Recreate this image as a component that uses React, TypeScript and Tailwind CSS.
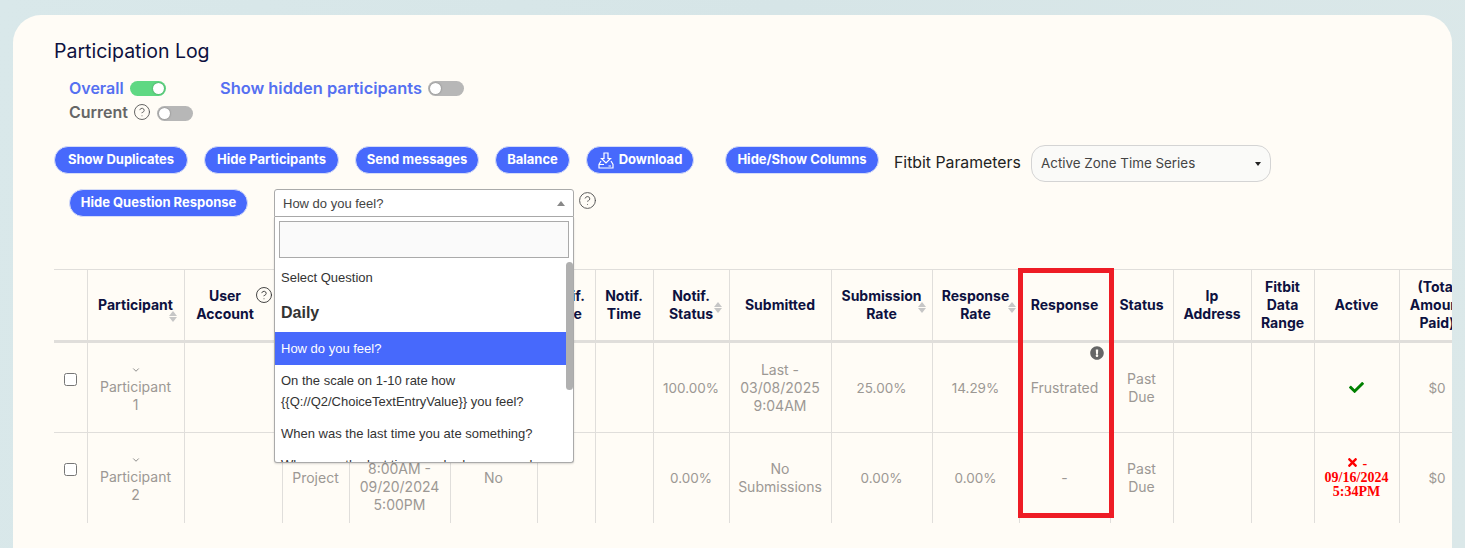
import { CircleHelp, ChevronDown } from "lucide-react";
import { FaCheck, FaTimes, FaExclamationCircle } from "react-icons/fa";

const dm = "font-['Inter','Noto_Sans',sans-serif]";

function Toggle({ on, className = "" }: { on?: boolean; className?: string }) {
  return (
    <span className={`flex h-[15px] w-9 shrink-0 items-center rounded-full px-[2px] ${on ? "justify-end bg-[#5fd883]" : "justify-start bg-[#b7b7b7]"} ${className}`}>
      <span className="size-[11px] rounded-full bg-white shadow-[0_0_2px_rgba(0,0,0,0.4)]" />
    </span>
  );
}

function Btn({ w, children, className = "" }: { w: string; children: React.ReactNode; className?: string }) {
  return (
    <button className={`flex h-[28px] shrink-0 items-center justify-center gap-[5px] rounded-full border border-[#d5dcf7] bg-[#4769fc] text-[13px] font-bold whitespace-nowrap text-white ${w} ${className}`}>
      {children}
    </button>
  );
}

function Sort({ className = "" }: { className?: string }) {
  return (
    <span className={`absolute flex w-[9px] flex-col gap-[1px] ${className}`}>
      <span className="h-0 w-0 border-x-[4.5px] border-b-[5px] border-x-transparent border-b-[#c6c6c6]" />
      <span className="h-0 w-0 border-x-[4.5px] border-t-[5px] border-x-transparent border-t-[#c6c6c6]" />
    </span>
  );
}

const widths = ["w-[33px]", "w-[97px]", "w-[98px]", "w-[67px]", "w-[101px]", "w-[87px]", "w-[58px]", "w-[58px]", "w-[76px]", "w-[102px]", "w-[101px]", "w-[87px]", "w-[91px]", "w-[63px]", "w-[78px]", "w-[63px]", "w-[85px]", "w-[76px]"];

const th = "relative border-x border-[#e0dedb] px-1 text-center align-middle text-[14px] leading-[18px] font-bold text-[#0d1140]";
const td = "relative border-x border-[#e0dedb] px-1 text-center align-middle text-[14px] leading-[18px] font-normal text-[#9c9894]";
const pct = "relative border-x border-[#e0dedb] px-1 text-center align-middle text-[13.5px] leading-[18px] font-normal text-[#9c9894]";

function Participant({ n }: { n: number }) {
  return (
    <div className="flex flex-col items-center pt-[4px]">
      <ChevronDown size={10} className="mb-[3px] text-[#777]" />
      <span>Participant</span>
      <span>{n}</span>
    </div>
  );
}

function Dropdown() {
  return (
    <div className="absolute top-[174px] left-[261px] z-10 w-[300px] font-['Liberation_Sans',sans-serif] text-[13px] text-[#444]">
      <div className="flex h-[28px] items-center justify-between rounded-t-[3px] border border-[#aaa] bg-white px-[8px] pt-[1px]">
        <span>How do you feel?</span>
        <span className="h-0 w-0 border-x-[4px] border-b-[5px] border-x-transparent border-b-[#888]" />
      </div>
      <div className="flex h-[246px] flex-col overflow-hidden rounded-b-[3px] border border-t-0 border-[#aaa] bg-white shadow-[0_1px_2px_rgba(0,0,0,0.15)]">
        <div className="px-1 pt-1">
          <div className="h-[37px] border border-[#aaa] bg-[#fafafa]" />
        </div>
        <div className="relative flex-1 overflow-hidden">
          <div className="mr-[7px] leading-[21px] text-[#333]">
            <div className="px-[6px] pt-[9px] pb-[8px]">Select Question</div>
            <div className="px-[6px] pt-[7px] pb-[9px] text-[16px] leading-[20px] font-bold">Daily</div>
            <div className="flex h-[33px] items-center bg-[#4769fc] px-[6px] pb-[1px] text-white">How do you feel?</div>
            <div className="px-[6px] pt-[5px] pb-[6px]">On the scale on 1-10 rate how<br />{"{{Q://Q2/ChoiceTextEntryValue}}"} you feel?</div>
            <div className="px-[6px] py-[5px]">When was the last time you ate something?</div>
            <div className="px-[6px] py-[5px]">When was the last time you had an unusual</div>
          </div>
          <div className="absolute top-[4px] right-0 h-[128px] w-[7px] rounded-full bg-[#b0b0b0]" />
        </div>
      </div>
    </div>
  );
}

export default function App() {
  return (
    <div className={`h-[548px] w-[1465px] overflow-hidden bg-[linear-gradient(100deg,#d9e8ea,#d6e5e7_50%,#dbe8e9)] pt-[15px] pl-[13px] ${dm}`}>
      <div className="relative h-[560px] w-[1439px] overflow-hidden rounded-t-[28px] bg-[#fffcf6] pt-[24px]">
        <h1 className="pl-[41px] text-[19.5px] leading-[24px] font-normal text-[#0d1140]">Participation Log</h1>

        <div className="mt-[16px] flex items-start pl-[56px]">
          <div className="flex flex-col gap-[6px]">
            <div className="flex h-[18px] items-center gap-[6px]">
              <span className="w-[55px] text-[16px] font-semibold whitespace-nowrap text-[#5570f1]">Overall</span>
              <Toggle on />
            </div>
            <div className="flex h-[18px] items-center">
              <span className="w-[61px] text-[16px] font-semibold whitespace-nowrap text-[#666]">Current</span>
              <CircleHelp size={18} strokeWidth={1.2} className="ml-[3px] text-[#555]" />
              <Toggle className="mt-[2px] ml-[6px]" />
            </div>
          </div>
          <div className="ml-[27px] flex h-[18px] items-center gap-[6px]">
            <span className="w-[202px] text-[16.4px] font-semibold whitespace-nowrap text-[#5570f1]">Show hidden participants</span>
            <Toggle />
          </div>
        </div>

        <div className="mt-[25px] flex items-start pl-[41px]">
          <Btn w="w-[134px]">Show Duplicates</Btn>
          <Btn w="w-[135px]" className="ml-4">Hide Participants</Btn>
          <Btn w="w-[124px]" className="ml-4">Send messages</Btn>
          <Btn w="w-[75px]" className="ml-4">Balance</Btn>
          <Btn w="w-[108px]" className="ml-4">
            <svg width="16" height="17" viewBox="0 0 16 17" fill="none" stroke="white" strokeWidth="1.2">
              <path d="M6 1h4v5.500h2.500L8 11 3.500 6.500H6z" />
              <path d="M3 9L1 12.500V16h14v-3.500L13 9M1 12.500h5M10.500 14H13" />
            </svg>
            Download
          </Btn>
          <Btn w="w-[154px]" className="ml-[31px]">Hide/Show Columns</Btn>
          <span className="ml-[15px] flex h-[34px] w-[127px] items-center text-[15.8px] whitespace-nowrap text-[#222]">Fitbit Parameters</span>
          <div className="-mt-[1px] ml-[10px] flex h-[37px] w-[240px] items-center justify-between rounded-[14px] border border-[#d4d4d4] bg-[#fafaf8] pr-[9px] pl-[9px] text-[13.4px] text-[#444]">
            <span>Active Zone Time Series</span>
            <span className="h-0 w-0 border-x-[3px] border-t-[4px] border-x-transparent border-t-[#222]" />
          </div>
        </div>

        <div className="mt-[7px] flex items-start pl-[56px]">
          <Btn w="w-[179px]">Hide Question Response</Btn>
          <CircleHelp size={19} strokeWidth={1.2} className="mt-[2px] ml-[330px] text-[#555]" />
        </div>

        <Dropdown />

        <div className="mt-[52px] ml-[41px] overflow-hidden">
          <table className="w-[1421px] table-fixed border-collapse">
            <colgroup>
              {widths.map((w, i) => <col key={i} className={w} />)}
            </colgroup>
            <thead>
              <tr className="h-[72px] border-t border-b-[3px] border-t-[#e0dedb] border-b-[#e0dedb]">
                <th className={`${th} border-l-0`}></th>
                <th className={th}>Participant<Sort className="top-[41px] right-[6px]" /></th>
                <th className={`${th} pr-[20px]`}>
                  User<br />Account
                  <CircleHelp size={18} strokeWidth={1.2} className="absolute top-[16px] right-[9px] text-[#333]" />
                </th>
                <th className={th}></th>
                <th className={th}></th>
                <th className={th}></th>
                <th className={th}>Notif.<br />Date</th>
                <th className={th}>Notif.<br />Time</th>
                <th className={th}>Notif.<br />Status<Sort className="top-[32px] right-[6px]" /></th>
                <th className={th}>Submitted</th>
                <th className={th}>Submission<br />Rate<Sort className="top-[32px] right-[5px]" /></th>
                <th className={th}>Response<br />Rate<Sort className="top-[32px] right-[2px]" /></th>
                <th className={th}>Response</th>
                <th className={th}>Status</th>
                <th className={th}>Ip<br />Address</th>
                <th className={th}>Fitbit<br />Data<br />Range</th>
                <th className={th}>Active</th>
                <th className={th}>(Total<br />Amount<br />Paid)</th>
              </tr>
            </thead>
            <tbody>
              <tr className="h-[91px] border-b border-[#e0dedb]">
                <td className={`${td} border-l-0`}><input type="checkbox" className="mx-auto mb-[16px] block size-[13px]" /></td>
                <td className={td}><Participant n={1} /></td>
                <td className={td}></td>
                <td className={td}></td>
                <td className={td}></td>
                <td className={td}></td>
                <td className={td}></td>
                <td className={td}></td>
                <td className={pct}>100.00%</td>
                <td className={td}>Last -<br />03/08/2025<br />9:04AM</td>
                <td className={pct}>25.00%</td>
                <td className={pct}>14.29%</td>
                <td className={td}>
                  <FaExclamationCircle size={14} className="absolute top-[3px] right-[6px] text-[#666]" />
                  Frustrated
                </td>
                <td className={td}>Past<br />Due</td>
                <td className={td}></td>
                <td className={td}></td>
                <td className={td}><FaCheck size={15} className="mx-auto text-[#008000]" /></td>
                <td className={pct}>$0</td>
              </tr>
              <tr className="h-[90px]">
                <td className={`${td} border-l-0`}><input type="checkbox" className="mx-auto mb-[16px] block size-[13px]" /></td>
                <td className={td}><Participant n={2} /></td>
                <td className={td}></td>
                <td className={td}>Project</td>
                <td className={td}>09/16/2024<br />8:00AM -<br />09/20/2024<br />5:00PM</td>
                <td className={td}>No</td>
                <td className={td}></td>
                <td className={td}></td>
                <td className={pct}>0.00%</td>
                <td className={td}>No<br />Submissions</td>
                <td className={pct}>0.00%</td>
                <td className={pct}>0.00%</td>
                <td className={td}>-</td>
                <td className={td}>Past<br />Due</td>
                <td className={td}></td>
                <td className={td}></td>
                <td className={td}>
                  <div className="font-['Liberation_Serif',serif] text-[14px] leading-[14px] font-bold text-[#ff0000]">
                    <FaTimes size={13} className="inline align-[-1px]" /> -<br />09/16/2024<br />5:34PM
                  </div>
                </td>
                <td className={pct}>$0</td>
              </tr>
            </tbody>
          </table>
        </div>

        <div className="absolute top-[253px] left-[1005px] z-20 h-[250px] w-[96px] border-[5px] border-[#ee1c25]" />
      </div>
    </div>
  );
}
